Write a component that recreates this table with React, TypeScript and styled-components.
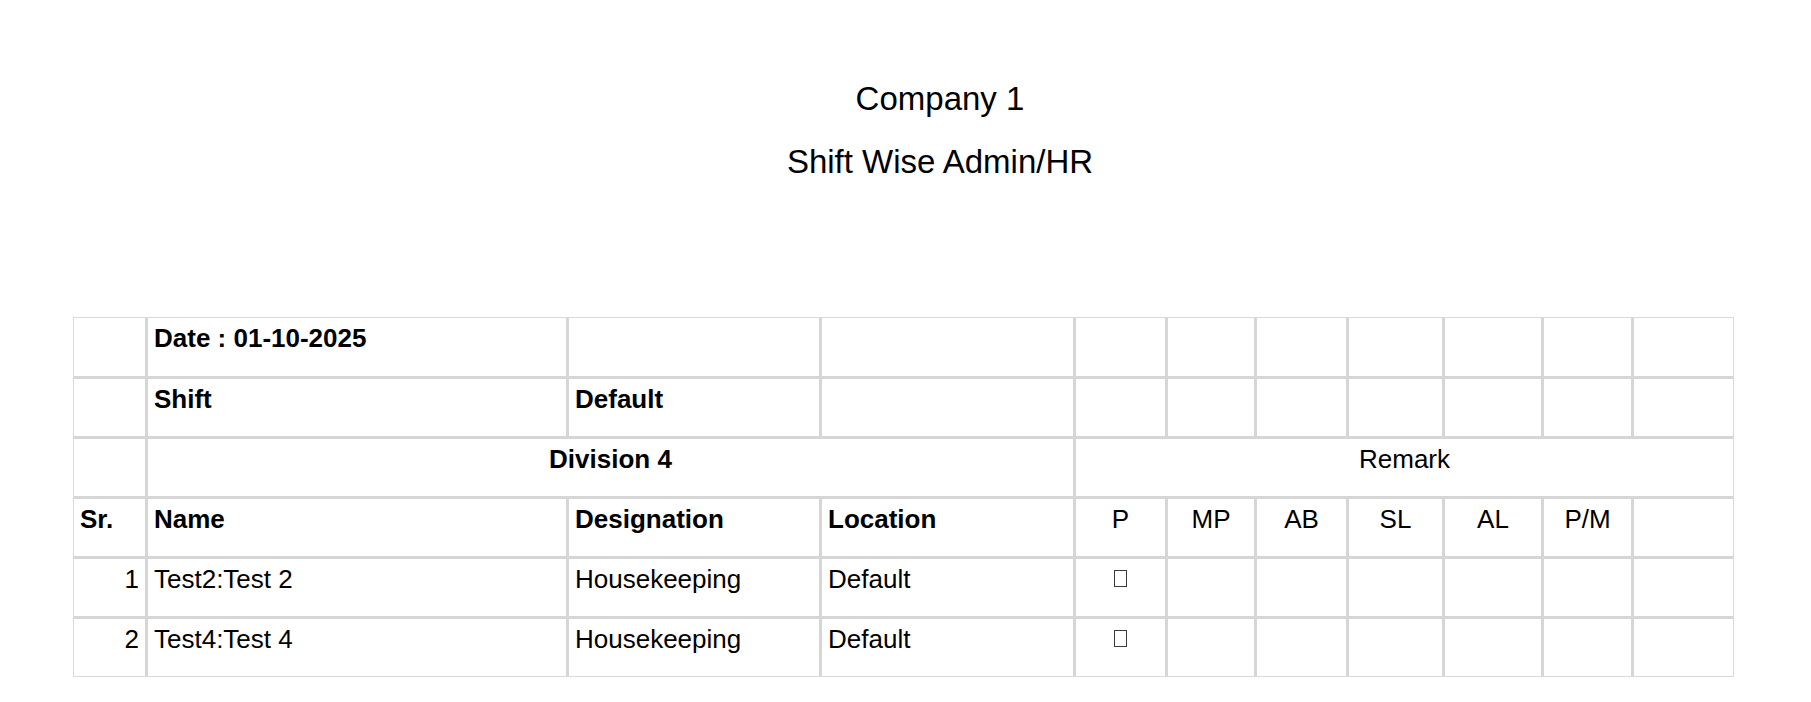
import React from "react";
import styled, { createGlobalStyle } from "styled-components";

const GlobalStyle = createGlobalStyle`
  html, body {
    margin: 0;
    padding: 0;
    background: #fff;
  }
  body {
    font-family: "Liberation Sans", Arial, sans-serif;
    color: #000;
  }
`;

const colWidths = [71, 421, 253, 254, 92, 89, 92, 96, 99, 90, 102];
const statusCols = ["P", "MP", "AB", "SL", "AL", "P/M", ""];

const employees = [
  { sr: 1, name: "Test2:Test 2", designation: "Housekeeping", location: "Default" },
  { sr: 2, name: "Test4:Test 4", designation: "Housekeeping", location: "Default" },
];

export default function App() {
  const blanks = (n: number) =>
    Array.from({ length: n }).map((_, i) => <Cell key={"b" + i} />);

  return (
    <>
      <GlobalStyle />
      <Page>
        <Heading>
          <Title>Company 1</Title>
          <Title>Shift Wise Admin/HR</Title>
        </Heading>

        <Sheet>
          <colgroup>
            {colWidths.map((w, i) => (
              <col key={i} style={{ width: w }} />
            ))}
          </colgroup>
          <tbody>
            <Row>
              <Cell />
              <Cell $bold>Date : 01-10-2025</Cell>
              {blanks(9)}
            </Row>
            <Row>
              <Cell />
              <Cell $bold>Shift</Cell>
              <Cell $bold>Default</Cell>
              {blanks(8)}
            </Row>
            <Row>
              <Cell />
              <Cell $bold $align="center" colSpan={3}>
                Division 4
              </Cell>
              <Cell $align="center" colSpan={7}>
                Remark
              </Cell>
            </Row>
            <Row>
              <Cell $bold>Sr.</Cell>
              <Cell $bold>Name</Cell>
              <Cell $bold>Designation</Cell>
              <Cell $bold>Location</Cell>
              {statusCols.map((s, i) => (
                <Cell key={i} $align="center">
                  {s}
                </Cell>
              ))}
            </Row>
            {employees.map((e) => (
              <Row key={e.sr}>
                <Cell $align="right">{e.sr}</Cell>
                <Cell>{e.name}</Cell>
                <Cell>{e.designation}</Cell>
                <Cell>{e.location}</Cell>
                <Cell $align="center">
                  <Tick />
                </Cell>
                {blanks(6)}
              </Row>
            ))}
          </tbody>
        </Sheet>
      </Page>
    </>
  );
}

const Page = styled.div`
  padding: 80px 0 40px;
`;

const Heading = styled.div`
  display: flex;
  flex-direction: column;
  align-items: center;
  gap: 25px;
  padding-left: 69px;
  margin-bottom: 136px;
`;

const Title = styled.div`
  font-size: 33px;
  line-height: 38px;
`;

const Sheet = styled.table`
  margin-left: 73px;
  width: 1659px;
  table-layout: fixed;
  border-collapse: separate;
  border-spacing: 0;
  border: 1px solid #dadada;
`;

const Row = styled.tr`
  &:first-child td {
    border-top: none;
    height: 58px;
  }
`;

const Cell = styled.td<{ $bold?: boolean; $align?: "left" | "center" | "right" }>`
  box-sizing: border-box;
  height: 60px;
  padding: 5px 6px;
  vertical-align: top;
  font-size: 26px;
  line-height: 30px;
  text-align: ${(p) => p.$align || "left"};
  font-weight: ${(p) => (p.$bold ? 700 : 400)};
  border-top: 3px solid #d6d6d6;
  border-left: 3px solid #d6d6d6;
  white-space: nowrap;

  &:first-child {
    border-left: none;
  }
`;

const Tick = styled.span`
  display: inline-block;
  box-sizing: border-box;
  width: 13px;
  height: 17px;
  margin-top: 6px;
  border: 1px solid #3a3a3a;
  vertical-align: top;
`;
